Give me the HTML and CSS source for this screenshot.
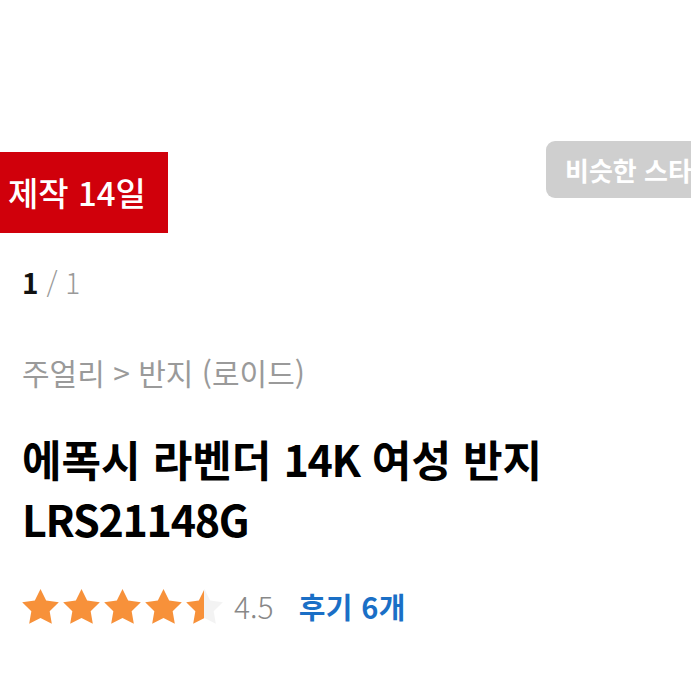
FILE: index.html
```html
<!DOCTYPE html>
<html lang="ko">
<head>
    <meta charset="UTF-8">
    <meta name="viewport" content="width=device-width, initial-scale=1.0">
    <title>에폭시 라벤더 14K 여성 반지</title>
    <link rel="stylesheet" href="styles.css">
</head>
<body>
    <div class="photo-area"></div>

    <div class="badge-row">
        <div class="made-badge">제작 14일</div>
        <button class="similar-btn">비슷한 스타일</button>
    </div>

    <div class="info">
        <div class="pager"><b>1</b> <span>/ 1</span></div>

        <div class="crumbs">주얼리 &gt; 반지 (로이드)</div>

        <h1 class="title">에폭시 라벤더 <span class="code">14K</span> 여성 반지<br><span class="code">LRS21148G</span></h1>

        <div class="rating">
            <div class="stars">
                <svg class="star" viewBox="2 2 20 19.1"><path d="M12 2l3.09 6.26L22 9.27l-5 4.87 1.18 6.88L12 17.77l-6.18 3.25L7 14.14 2 9.27l6.91-1.01L12 2z"/></svg>
                <svg class="star" viewBox="2 2 20 19.1"><path d="M12 2l3.09 6.26L22 9.27l-5 4.87 1.18 6.88L12 17.77l-6.18 3.25L7 14.14 2 9.27l6.91-1.01L12 2z"/></svg>
                <svg class="star" viewBox="2 2 20 19.1"><path d="M12 2l3.09 6.26L22 9.27l-5 4.87 1.18 6.88L12 17.77l-6.18 3.25L7 14.14 2 9.27l6.91-1.01L12 2z"/></svg>
                <svg class="star" viewBox="2 2 20 19.1"><path d="M12 2l3.09 6.26L22 9.27l-5 4.87 1.18 6.88L12 17.77l-6.18 3.25L7 14.14 2 9.27l6.91-1.01L12 2z"/></svg>
                <svg class="star" viewBox="2 2 20 19.1">
                    <defs>
                        <linearGradient id="half">
                            <stop offset="50%" stop-color="#f7913a"/>
                            <stop offset="50%" stop-color="#f3f3f3"/>
                        </linearGradient>
                    </defs>
                    <path fill="url(#half)" d="M12 2l3.09 6.26L22 9.27l-5 4.87 1.18 6.88L12 17.77l-6.18 3.25L7 14.14 2 9.27l6.91-1.01L12 2z"/>
                </svg>
            </div>
            <span class="score">4.5</span>
            <a class="reviews" href="#">후기 6개</a>
        </div>
    </div>
</body>
</html>
```

FILE: styles.css
```css
body {
    margin: 0;
    background-color: #fff;
    font-family: "Noto Sans CJK KR", sans-serif;
    color: #000;
    overflow: hidden;
}
.photo-area {
    height: 141px;
}
.badge-row {
    display: flex;
    align-items: flex-start;
}
.made-badge {
    margin-top: 11px;
    width: 168px;
    height: 81px;
    box-sizing: border-box;
    padding-left: 8px;
    background-color: #d0000b;
    color: #fff;
    font-size: 33px;
    font-weight: 500;
    line-height: 80px;
    white-space: nowrap;
}
.similar-btn {
    margin-left: auto;
    margin-right: -60px;
    width: 205px;
    height: 57px;
    flex-shrink: 0;
    border: none;
    border-radius: 9px;
    background-color: #cfcfcf;
    color: #fff;
    font-family: inherit;
    font-size: 26px;
    font-weight: 700;
    text-align: left;
    padding: 0 0 0 19px;
    white-space: nowrap;
}
.info {
    padding: 0 22px;
}
.pager {
    margin-top: 31px;
    font-size: 28px;
    line-height: 36px;
}
.pager b {
    font-weight: 700;
    color: #111;
}
.pager span {
    color: #999;
    font-weight: 300;
}
.crumbs {
    margin-top: 51px;
    color: #9a9a9a;
    font-size: 30px;
    line-height: 42px;
}
.title {
    margin: 35px 0 0 0;
    font-size: 43px;
    font-weight: 700;
    line-height: 60px;
}
.title .code {
    letter-spacing: -1.3px;
}
.rating {
    display: flex;
    align-items: center;
    margin-top: 36px;
}
.stars {
    display: flex;
    gap: 4px;
}
.star {
    width: 37px;
    height: 35px;
    fill: #f7913a;
}
.score {
    margin-left: 11px;
    font-size: 30px;
    font-weight: 300;
    color: #888;
}
.reviews {
    margin-left: 25px;
    font-size: 29px;
    font-weight: 700;
    letter-spacing: 0.4px;
    color: #1a6fc6;
    text-decoration: none;
}
```
